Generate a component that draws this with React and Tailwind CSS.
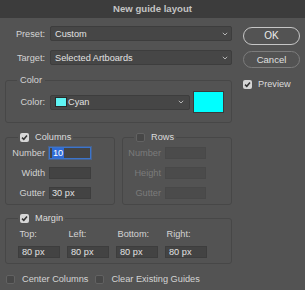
import React from 'react';

const Check = ({ checked }) => (
  <span
    className={`flex items-center justify-center w-[9px] h-[9px] rounded-[2px] shrink-0 ${
      checked ? 'bg-[#d6d6d6]' : 'bg-[#474747] border border-[#626262]'
    }`}
  >
    {checked && (
      <svg width="7" height="7" viewBox="0 0 7 7">
        <path d="M1 3.6 L2.8 5.3 L6 1.5" fill="none" stroke="#333" strokeWidth="1.5" />
      </svg>
    )}
  </span>
);

const Chevron = () => (
  <svg width="6" height="4" viewBox="0 0 6 4" className="shrink-0">
    <path d="M0.8 0.8 L3 3 L5.2 0.8" fill="none" stroke="#b4b4b4" strokeWidth="1" />
  </svg>
);

const Select = ({ children, className = '' }) => (
  <div className={`flex items-center h-[15px] bg-[#464646] border border-[#3d3d3d] rounded-[2px] pl-[4px] pr-[3px] ${className}`}>
    <div className="flex-1 flex items-center text-[#e2e2e2]">{children}</div>
    <Chevron />
  </div>
);

const Field = ({ label, value, labelW, inputW, disabled, focused }) => (
  <div className="flex items-center h-[12px]">
    <span className={`text-right ${labelW} ${disabled ? 'text-[#7b7b7b]' : 'text-[#d2d2d2]'}`}>{label}</span>
    <div
      className={`ml-[4px] h-[12px] ${inputW} flex items-center pl-[2px] ${
        focused
          ? 'bg-[#444] border border-[#3b74cc] shadow-[0_0_0_1px_rgba(59,116,204,0.45)]'
          : disabled
          ? 'bg-[#4b4b4b] border border-[#484848]'
          : 'bg-[#434343] border border-[#3d3d3d]'
      }`}
    >
      {focused ? (
        <span className="bg-[#2f6bd6] text-white leading-[10px] px-[1px]">{value}</span>
      ) : (
        <span className="text-[#e2e2e2] leading-[10px]">{value}</span>
      )}
    </div>
  </div>
);

export default function App() {
  return (
    <div className="w-[305px] h-[290px] overflow-hidden bg-[#535353] text-[9.2px] text-[#d4d4d4] font-['Liberation_Sans',Arial,sans-serif] leading-[12px]">
      <div className="h-[18px] flex items-center justify-center bg-[#3c3c3c] font-bold text-[9.6px] text-[#c4c4c4]">
        New guide layout
      </div>

      <div className="flex pl-[5px]">
        <div className="w-[227px] pt-[8px]">
          <div className="flex items-center h-[15px]">
            <span className="w-[40px] text-right">Preset:</span>
            <Select className="ml-[5px] flex-1">Custom</Select>
          </div>
          <div className="flex items-center h-[15px] mt-[9px]">
            <span className="w-[40px] text-right">Target:</span>
            <Select className="ml-[5px] flex-1">Selected Artboards</Select>
          </div>

          <div className="mt-[15px] h-[43px] border border-[#474747] rounded-[3px]">
            <span className="block w-fit -mt-[7px] ml-[11px] px-[3px] bg-[#535353]">Color</span>
            <div className="flex items-center h-[22px] mt-[5px]">
              <span className="w-[39px] text-right">Color:</span>
              <Select className="ml-[5px] w-[140px] pr-[5px]">
                <span className="w-[12px] h-[10px] bg-[#5ff4f4] border border-[#2a2a2a] mr-[1px]" />
                Cyan
              </Select>
              <div className="ml-[3px] w-[31px] h-[22px] bg-[#00ffff] border border-[#3a3a3a]" />
            </div>
          </div>

          <div className="flex gap-[7px] mt-[14px]">
            <div className="w-[110px] h-[68px] border border-[#474747] rounded-[3px]">
              <span className="flex items-center gap-[6px] w-fit -mt-[7px] ml-[12px] px-[2px] bg-[#535353]">
                <Check checked />
                <span className="text-[#dcdcdc]">Columns</span>
              </span>
              <div className="flex flex-col gap-[8px] mt-[4px]">
                <Field label="Number" value="10" labelW="w-[39px]" inputW="w-[42px]" focused />
                <Field label="Width" value="" labelW="w-[39px]" inputW="w-[42px]" />
                <Field label="Gutter" value="30 px" labelW="w-[39px]" inputW="w-[42px]" />
              </div>
            </div>
            <div className="w-[110px] h-[68px] border border-[#474747] rounded-[3px]">
              <span className="flex items-center gap-[6px] w-fit -mt-[7px] ml-[11px] px-[2px] bg-[#535353]">
                <Check />
                <span className="text-[#dcdcdc]">Rows</span>
              </span>
              <div className="flex flex-col gap-[8px] mt-[4px]">
                <Field label="Number" value="" labelW="w-[38px]" inputW="w-[41px]" disabled />
                <Field label="Height" value="" labelW="w-[38px]" inputW="w-[41px]" disabled />
                <Field label="Gutter" value="" labelW="w-[38px]" inputW="w-[41px]" disabled />
              </div>
            </div>
          </div>

          <div className="mt-[13px] h-[46px] border border-[#474747] rounded-[3px]">
            <span className="flex items-center gap-[6px] w-fit -mt-[7px] ml-[12px] px-[2px] bg-[#535353]">
              <Check checked />
              <span className="text-[#dcdcdc]">Margin</span>
            </span>
            <div className="grid grid-cols-[42px_42px_42px_42px] gap-x-[7px] pl-[12px] mt-[4px]">
              {['Top:', 'Left:', 'Bottom:', 'Right:'].map((l) => (
                <span key={l} className="pl-[1.5px]">{l}</span>
              ))}
            </div>
            <div className="grid grid-cols-[42px_42px_42px_42px] gap-x-[7px] pl-[12px] mt-[6px]">
              {[0, 1, 2, 3].map((i) => (
                <div key={i} className="h-[12px] flex items-center pl-[3px] bg-[#434343] border border-[#3d3d3d] text-[#e2e2e2] leading-[10px]">
                  80 px
                </div>
              ))}
            </div>
          </div>

          <div className="flex items-center h-[12px] mt-[9px] ml-[1px]">
            <Check />
            <span className="ml-[7px]">Center Columns</span>
            <span className="ml-[7px]">
              <Check />
            </span>
            <span className="ml-[7px]">Clear Existing Guides</span>
          </div>
        </div>

        <div className="ml-[11px] w-[57px] pt-[9px]">
          <div className="h-[18px] flex items-center justify-center rounded-full border-[1.5px] border-[#c6c6c6] text-[10px] text-[#ececec]">
            OK
          </div>
          <div className="h-[17px] mt-[6px] flex items-center justify-center rounded-full border border-[#7c7c7c] text-[9.5px] text-[#e0e0e0]">
            Cancel
          </div>
          <div className="flex items-center gap-[6px] mt-[10px]">
            <Check checked />
            <span className="text-[#dcdcdc]">Preview</span>
          </div>
        </div>
      </div>
    </div>
  );
}
